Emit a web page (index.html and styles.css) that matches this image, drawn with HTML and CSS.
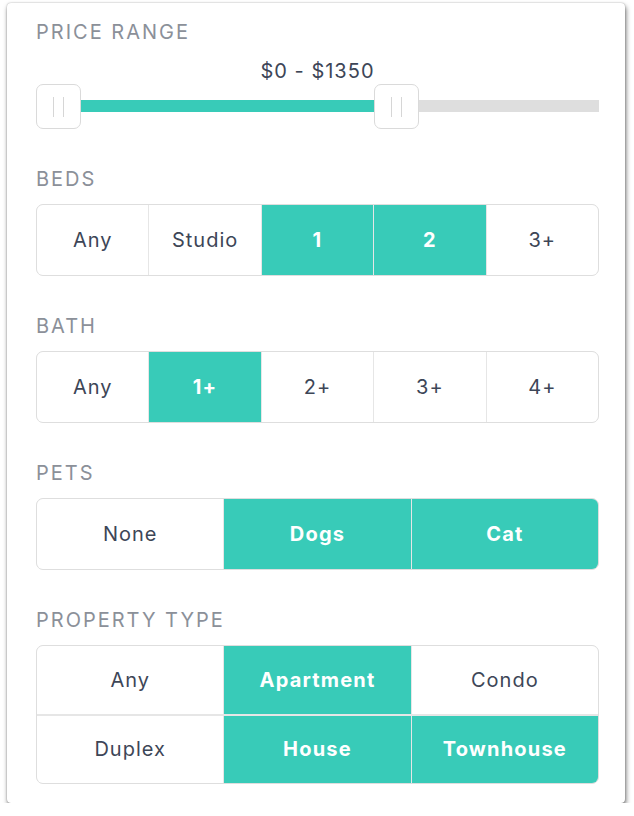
FILE: index.html
```html
<!DOCTYPE html>
<html lang="en">
<head>
<meta charset="utf-8">
<title>Filters</title>
<link rel="stylesheet" href="styles.css">
</head>
<body>
<div class="card">
  <section class="section price">
    <div class="label">PRICE RANGE</div>
    <div class="price-value">$0 - $1350</div>
    <div class="slider">
      <div class="track"><div class="fill" style="width: 360px"></div></div>
      <div class="handle" style="left: 0px"><span></span><span></span></div>
      <div class="handle" style="left: 338px"><span></span><span></span></div>
    </div>
  </section>

  <section class="section">
    <div class="label">BEDS</div>
    <div class="group cols-5">
      <div class="opt">Any</div>
      <div class="opt">Studio</div>
      <div class="opt on">1</div>
      <div class="opt on">2</div>
      <div class="opt">3+</div>
    </div>
  </section>

  <section class="section">
    <div class="label">BATH</div>
    <div class="group cols-5">
      <div class="opt">Any</div>
      <div class="opt on">1+</div>
      <div class="opt">2+</div>
      <div class="opt">3+</div>
      <div class="opt">4+</div>
    </div>
  </section>

  <section class="section">
    <div class="label">PETS</div>
    <div class="group cols-3">
      <div class="opt">None</div>
      <div class="opt on">Dogs</div>
      <div class="opt on">Cat</div>
    </div>
  </section>

  <section class="section">
    <div class="label">PROPERTY TYPE</div>
    <div class="group cols-3 rows-2">
      <div class="opt">Any</div>
      <div class="opt on">Apartment</div>
      <div class="opt">Condo</div>
      <div class="opt">Duplex</div>
      <div class="opt on">House</div>
      <div class="opt on">Townhouse</div>
    </div>
  </section>
</div>
</body>
</html>
```

FILE: styles.css
```css
* { box-sizing: border-box; }

html, body {
  margin: 0;
  padding: 0;
  background: #ffffff;
}

body {
  font-family: Inter, "Liberation Sans", sans-serif;
  color: #3d4657;
}

.card {
  margin: 3px 0 0 7px;
  width: 618px;
  height: 800px;
  padding: 19px 26px 0 29px;
  background: #ffffff;
  border-radius: 4px;
  box-shadow: 1px 3px 5px rgba(0, 0, 0, 0.55), 0 0 1.5px rgba(0, 0, 0, 0.35);
  display: flex;
  flex-direction: column;
  gap: 40px;
}

.section {
  display: flex;
  flex-direction: column;
}

.label {
  font-size: 20px;
  line-height: 20px;
  letter-spacing: 2px;
  color: #8b9099;
  font-weight: 400;
  height: 20px;
}

.price-value {
  margin-top: 19px;
  text-align: center;
  font-size: 20px;
  line-height: 20px;
  font-weight: 400;
  letter-spacing: 1px;
  color: #3d4657;
}

.slider {
  position: relative;
  margin-top: 3px;
  height: 45px;
}

.track {
  margin-top: 16px;
  height: 12px;
  background: #dedede;
}

.fill {
  height: 12px;
  background: #38cbb8;
}

.handle {
  position: absolute;
  top: 0;
  width: 45px;
  height: 45px;
  background: #ffffff;
  border: 1px solid #dadada;
  border-radius: 7px;
  display: flex;
  justify-content: center;
  align-items: center;
  gap: 8.5px;
}

.handle span {
  width: 1.5px;
  height: 20px;
  background: #d6d6d6;
}

.group {
  margin-top: 15px;
  display: grid;
  border: 1px solid #dedede;
  border-radius: 7px;
  overflow: hidden;
  height: 72px;
  background: #e6e6e6;
  gap: 1px;
}

.cols-5 { grid-template-columns: repeat(5, 1fr); }
.cols-3 { grid-template-columns: repeat(3, 1fr); }
.rows-2 { height: 139px; grid-template-rows: 1fr 1fr; gap: 2px 1px; }

.opt {
  background: #ffffff;
  display: flex;
  align-items: center;
  justify-content: center;
  font-size: 20px;
  font-weight: 400;
  letter-spacing: 1px;
  color: #3d4657;
}

.opt.on {
  background: #38cbb8;
  color: #ffffff;
  font-weight: 700;
  letter-spacing: 1.2px;
}
```
